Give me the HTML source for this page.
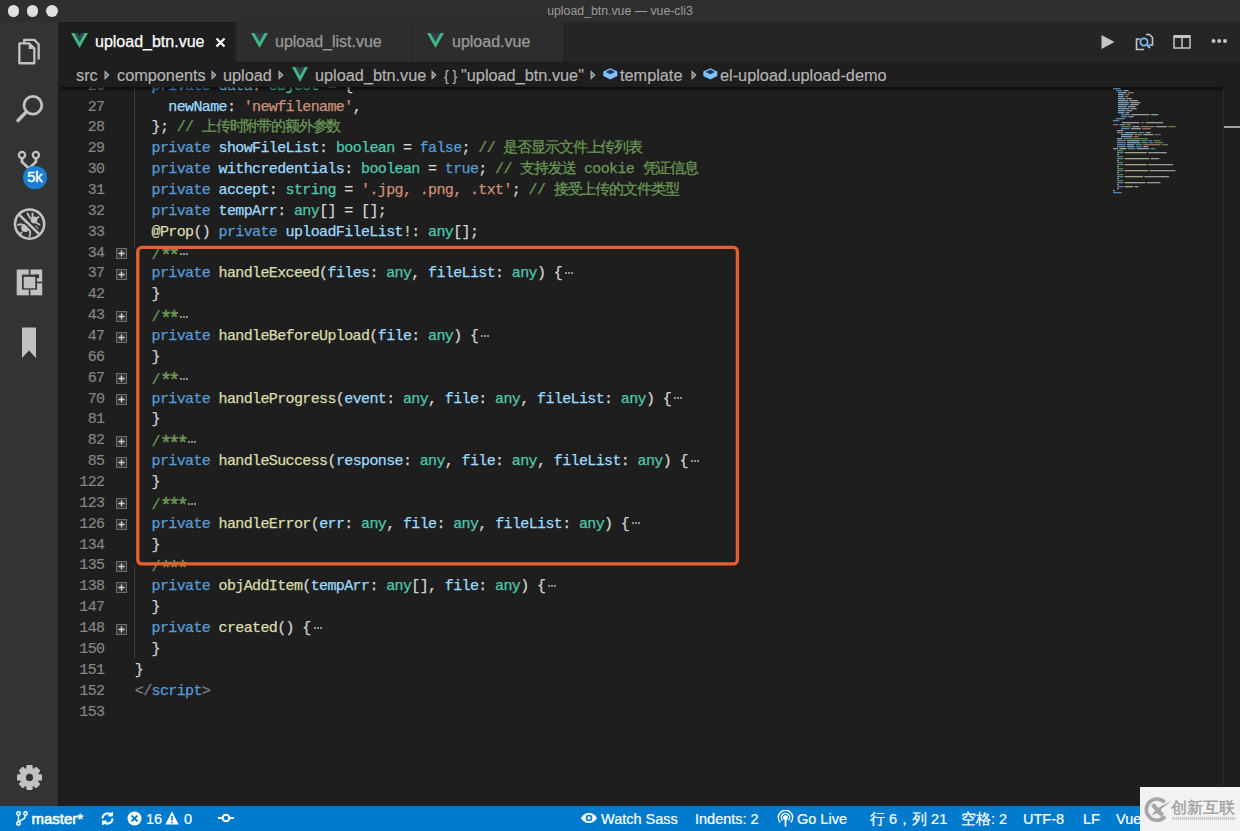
<!DOCTYPE html>
<html><head><meta charset="utf-8"><title>upload_btn.vue — vue-cli3</title>
<style>
*{margin:0;padding:0;box-sizing:border-box}
html,body{width:1240px;height:831px;overflow:hidden;background:#1e1e1e;font-family:"Liberation Sans",sans-serif}
.abs{position:absolute}
#title{position:absolute;left:0;top:0;width:1240px;height:22px;background:#2f2f2f}
#title .dot{position:absolute;top:4.8px;width:11.8px;height:11.8px;border-radius:50%;background:#e0e0e0}
#title .tt{position:absolute;left:0;width:1240px;top:3.7px;text-align:center;color:#9b9b9b;font-size:12.3px;line-height:14px;white-space:pre}
#act{position:absolute;left:0;top:22px;width:58px;height:784px;background:#333333}
#act svg{position:absolute}
#tabs{position:absolute;left:58px;top:22px;width:1182px;height:40px;background:#252526}
.tab{position:absolute;top:0;height:40px;background:#2d2d2d}
.tab .lbl{-webkit-text-stroke:0.25px currentColor;position:absolute;top:11px;font-size:16px;line-height:18px;color:#9a9a9a;white-space:pre}
.tab svg{position:absolute;top:11px}
#bc{-webkit-text-stroke:0.15px currentColor;position:absolute;left:58px;top:62px;width:1182px;height:25px;background:#1e1e1e;color:#b4b4b4;font-size:16.3px;line-height:18px;white-space:pre}
#bc span{position:absolute;top:3.6px}
#bc svg{position:absolute}
#bcsh{position:absolute;left:58px;top:87px;width:1166px;height:5px;background:linear-gradient(#000000a0,#00000000)}
#editor{position:absolute;left:58px;top:87px;width:1182px;height:719px;overflow:hidden}
#code{position:absolute;left:-58px;top:-87px;width:1240px;height:831px}
.ln{-webkit-text-stroke:0.25px currentColor;position:absolute;left:134.8px;height:20.86px;line-height:20.86px;font-family:"Liberation Mono",monospace;font-size:15px;letter-spacing:-0.625px;color:#d4d4d4;white-space:pre}
.nm{-webkit-text-stroke:0.2px currentColor;position:absolute;left:60px;width:44.5px;text-align:right;height:20.86px;line-height:20.86px;font-family:"Liberation Mono",monospace;font-size:15px;letter-spacing:-0.625px;color:#858585;white-space:pre}
.k{color:#569cd6}.f{color:#dcdcaa}.v{color:#9cdcfe}.t{color:#4ec9b0}.s{color:#ce9178}.c{color:#6a9955}.p{color:#d4d4d4}.g{color:#808080}
.el{display:inline-block;width:12px;height:10px;position:relative;vertical-align:middle}
.el:before{content:"";position:absolute;left:3px;top:3.5px;width:2px;height:2px;background:#8f8f8f;box-shadow:3px 0 #8f8f8f,6px 0 #8f8f8f}
#status{-webkit-text-stroke:0.2px #fff;position:absolute;left:0;top:806px;width:1240px;height:25px;background:#007acc;color:#ffffff;font-size:14.5px;line-height:16px;white-space:pre}
#status span{position:absolute;top:4.7px}
#status svg{position:absolute}
#wm{position:absolute;left:1140px;top:787px;width:100px;height:44px;background:#f2f2f2}
.ast{font-weight:normal;position:relative;top:3.5px;font-size:20px;letter-spacing:-3.625px;-webkit-text-stroke:0.5px currentColor}
.cj{font-size:15px;letter-spacing:-1.15px}
.fb{position:absolute;left:116px;width:11px;height:11px}

</style></head><body>
<div id="title">
  <div class="dot" style="left:7.5px"></div>
  <div class="dot" style="left:26.5px"></div>
  <div class="dot" style="left:46px"></div>
  <div class="tt">upload_btn.vue — vue-cli3</div>
</div>

<div id="act">
  <!-- explorer -->
  <svg style="left:16px;top:15px" width="26" height="28" viewBox="0 0 26 28" fill="none" stroke="#c2c2c2" stroke-width="2.3" stroke-linejoin="round">
    <path d="M3.35 6.45H13.3L18.35 11.5V26.25H3.35z"/>
    <path d="M13.3 6.45V11.5H18.35z" fill="#c2c2c2" stroke-width="1.2"/>
    <path d="M8.15 5.8V2.85H18.3L22.65 7.2V22.4"/>
  </svg>
  <!-- search -->
  <svg style="left:15px;top:73px" width="30" height="30" viewBox="0 0 30 30" fill="none" stroke="#c2c2c2" stroke-linecap="round">
    <circle cx="17.9" cy="10.3" r="8.9" stroke-width="2.8"/>
    <path d="M10.8 17.6L3 25.5" stroke-width="3.5"/>
  </svg>
  <!-- scm -->
  <svg style="left:14px;top:126px" width="30" height="26" viewBox="0 0 30 26" fill="none" stroke="#c2c2c2" stroke-width="2.3">
    <circle cx="8" cy="7" r="3.1"/>
    <circle cx="21.9" cy="7" r="3.1"/>
    <path d="M8 10.2v3.8l7 6.5M21.9 10.2v3.8l-7 6.5" stroke-width="2.8"/>
  </svg>
  <div style="position:absolute;left:22.6px;top:143.8px;width:24.7px;height:23px;border-radius:12px;background:#1a7fd4;color:#fff;font-size:14.5px;line-height:23px;text-align:center;-webkit-text-stroke:0.4px #fff">5k</div>
  <!-- debug -->
  <svg style="left:13px;top:183px" width="36" height="36" viewBox="0 0 36 36" fill="none" stroke="#c2c2c2" stroke-linecap="round">
    <circle cx="12.2" cy="23" r="4" fill="#c2c2c2" stroke="none"/>
    <path d="M5 19.8c2.5-1 4.5-.5 6 1M16 24.5c1.5 1.5 1.5 4 .5 7M8.5 27.5c-1 1-1.5 2-1.5 3" stroke-width="1.8"/>
    <circle cx="21" cy="15" r="3.4" fill="#c2c2c2" stroke="none"/>
    <path d="M14.5 8.5l2.5 4.5M19.5 8.5v3.5M25.5 12l-2.5 2M26.5 19.5l-3-1.5M25 24.5l-2-3" stroke-width="1.8"/>
    <path d="M6.6 10.1L25.9 28.9" stroke="#333333" stroke-width="6"/>
    <path d="M6.6 10.1L25.9 28.9" stroke-width="2.6"/>
    <circle cx="16.6" cy="19.1" r="14.6" stroke-width="2.6"/>
  </svg>
  <!-- extensions -->
  <svg style="left:16px;top:247px" width="28" height="28" viewBox="0 0 28 28">
    <rect x="0.7" y="0.5" width="25.5" height="25.8" fill="#c2c2c2"/>
    <rect x="6" y="5.6" width="15" height="15" fill="#333333"/>
    <path d="M19 5.6h4v3.5h-2z" fill="#333333"/>
    <rect x="7.7" y="7.8" width="11.6" height="11.5" fill="#c2c2c2"/>
    <rect x="12.8" y="0" width="1.6" height="6" fill="#333333"/>
    <rect x="12.8" y="20.5" width="1.6" height="6" fill="#333333"/>
    <rect x="20.5" y="12.7" width="6" height="1.6" fill="#333333"/>
  </svg>
  <!-- bookmark -->
  <svg style="left:21px;top:304px" width="16" height="33" viewBox="0 0 16 33" fill="#c2c2c2">
    <path d="M1 1.5h14v30.5l-7-7.5-7 7.5z"/>
  </svg>
  <!-- gear -->
  <svg style="left:15px;top:741px" width="30" height="30" viewBox="0 0 30 30">
    <g fill="#c2c2c2">
      <circle cx="14.5" cy="14.4" r="9.6"/>
      <rect x="11.3" y="1.9" width="6.4" height="25" rx="1.2"/>
      <rect x="11.3" y="1.9" width="6.4" height="25" rx="1.2" transform="rotate(45 14.5 14.4)"/>
      <rect x="11.3" y="1.9" width="6.4" height="25" rx="1.2" transform="rotate(90 14.5 14.4)"/>
      <rect x="11.3" y="1.9" width="6.4" height="25" rx="1.2" transform="rotate(135 14.5 14.4)"/>
    </g>
    <circle cx="14.5" cy="14.4" r="3.6" fill="#333333"/>
  </svg>
</div>

<div id="tabs">
  <div class="tab" style="left:0;width:176px;background:#1e1e1e">
    <svg style="left:13px" width="17" height="15" viewBox="0 0 261.76 226.69" preserveAspectRatio="none"><path d="M161.096.001l-30.225 52.351L100.647.001H-.005l130.877 226.688L261.749.001z" fill="#41b883"/><path d="M161.096.001l-30.225 52.351L100.647.001H52.346l78.526 136.01L209.398.001z" fill="#2f3d4c"/></svg>
    <div class="lbl" style="left:37px;color:#ffffff">upload_btn.vue</div>
    <svg style="left:157px;top:15px" width="11" height="11" viewBox="0 0 11 11"><path d="M1.5 1.5l8 8M9.5 1.5l-8 8" stroke="#ffffff" stroke-width="2.2"/></svg>
  </div>
  <div class="tab" style="left:179px;width:175px">
    <svg style="left:13.5px" width="17" height="15" viewBox="0 0 261.76 226.69" preserveAspectRatio="none"><path d="M161.096.001l-30.225 52.351L100.647.001H-.005l130.877 226.688L261.749.001z" fill="#41b883"/><path d="M161.096.001l-30.225 52.351L100.647.001H52.346l78.526 136.01L209.398.001z" fill="#2f3d4c"/></svg>
    <div class="lbl" style="left:38px">upload_list.vue</div>
  </div>
  <div class="tab" style="left:355px;width:150px">
    <svg style="left:13.5px" width="17" height="15" viewBox="0 0 261.76 226.69" preserveAspectRatio="none"><path d="M161.096.001l-30.225 52.351L100.647.001H-.005l130.877 226.688L261.749.001z" fill="#41b883"/><path d="M161.096.001l-30.225 52.351L100.647.001H52.346l78.526 136.01L209.398.001z" fill="#2f3d4c"/></svg>
    <div class="lbl" style="left:39px">upload.vue</div>
  </div>
  <!-- right actions -->
  <svg style="position:absolute;left:1042px;top:12px" width="16" height="16" viewBox="0 0 16 16"><path d="M1.5 1l13 7-13 7z" fill="#c5c5c5"/></svg>
  <svg style="position:absolute;left:1077px;top:11px" width="19" height="18" viewBox="0 0 19 18" fill="none" stroke="#c5c5c5" stroke-width="1.6">
    <path d="M5 6H1.5v10.5H9"/>
    <path d="M11 1.5h3.5l3 3V12H14"/>
    <circle cx="9" cy="9" r="3.6" stroke="#75beff" stroke-width="1.8"/>
    <path d="M11.5 11.5l3.5 3.5" stroke="#75beff" stroke-width="2"/>
  </svg>
  <svg style="position:absolute;left:1115px;top:12px" width="18" height="15" viewBox="0 0 18 15" fill="none" stroke="#c5c5c5">
    <rect x="1" y="2" width="16" height="12" stroke-width="1.5"/>
    <path d="M1 2.5h16" stroke-width="3"/>
    <path d="M9 2v12" stroke-width="1.5"/>
  </svg>
  <svg style="position:absolute;left:1153px;top:16px" width="16" height="6" viewBox="0 0 16 6" fill="#c5c5c5">
    <circle cx="2.5" cy="3" r="2"/><circle cx="8.2" cy="3" r="2"/><circle cx="14" cy="3" r="2"/>
  </svg>
</div>

<div id="bc">
  <span style="left:18px">src</span>
  <svg style="left:46px;top:8px" width="6" height="10" viewBox="0 0 6 10"><path d="M1.2 1.6L4.6 5L1.2 8.4Z" fill="#555" stroke="#b0b0b0" stroke-width="1.3"/></svg>
  <span style="left:59px">components</span>
  <svg style="left:153px;top:8px" width="6" height="10" viewBox="0 0 6 10"><path d="M1.2 1.6L4.6 5L1.2 8.4Z" fill="#555" stroke="#b0b0b0" stroke-width="1.3"/></svg>
  <span style="left:165px">upload</span>
  <svg style="left:220px;top:8px" width="6" height="10" viewBox="0 0 6 10"><path d="M1.2 1.6L4.6 5L1.2 8.4Z" fill="#555" stroke="#b0b0b0" stroke-width="1.3"/></svg>
  <svg style="left:234px;top:5px" width="16" height="15" viewBox="0 0 261.76 226.69" preserveAspectRatio="none"><path d="M161.096.001l-30.225 52.351L100.647.001H-.005l130.877 226.688L261.749.001z" fill="#41b883"/><path d="M161.096.001l-30.225 52.351L100.647.001H52.346l78.526 136.01L209.398.001z" fill="#2f3d4c"/></svg>
  <span style="left:257px">upload_btn.vue</span>
  <svg style="left:373px;top:8px" width="6" height="10" viewBox="0 0 6 10"><path d="M1.2 1.6L4.6 5L1.2 8.4Z" fill="#555" stroke="#b0b0b0" stroke-width="1.3"/></svg>
  <span style="left:386px;font-size:14px;top:4.5px">{ }</span>
  <span style="left:403px">"upload_btn.vue"</span>
  <svg style="left:532px;top:8px" width="6" height="10" viewBox="0 0 6 10"><path d="M1.2 1.6L4.6 5L1.2 8.4Z" fill="#555" stroke="#b0b0b0" stroke-width="1.3"/></svg>
  <svg style="left:545px;top:6px" width="15" height="12" viewBox="0 0 15 12"><path d="M7.3 0.2L14.3 3.6V8L7.3 11.6L0.3 8V3.6Z" fill="#80c2ff"/><path d="M7.3 1.6L12 3.9L7.3 6.3L2.6 3.9Z" fill="#1d3a5a"/></svg>
  <span style="left:562px">template</span>
  <svg style="left:633px;top:8px" width="6" height="10" viewBox="0 0 6 10"><path d="M1.2 1.6L4.6 5L1.2 8.4Z" fill="#555" stroke="#b0b0b0" stroke-width="1.3"/></svg>
  <svg style="left:644.5px;top:6px" width="15" height="12" viewBox="0 0 15 12"><path d="M7.3 0.2L14.3 3.6V8L7.3 11.6L0.3 8V3.6Z" fill="#80c2ff"/><path d="M7.3 1.6L12 3.9L7.3 6.3L2.6 3.9Z" fill="#1d3a5a"/></svg>
  <span style="left:662px">el-upload.upload-demo</span>
</div>

<div id="editor">
  <div id="code">
    <div style="position:absolute;left:134px;top:87px;width:1px;height:160px;background:#404040"></div>
    <div style="position:absolute;left:134px;top:565px;width:1px;height:93px;background:#404040"></div>
<div class="nm" style="top:76.71px">26</div>
<div class="nm" style="top:97.57px">27</div>
<div class="nm" style="top:118.43px">28</div>
<div class="nm" style="top:139.29px">29</div>
<div class="nm" style="top:160.15px">30</div>
<div class="nm" style="top:181.01px">31</div>
<div class="nm" style="top:201.87px">32</div>
<div class="nm" style="top:222.73px">33</div>
<div class="nm" style="top:243.59px">34</div>
<div class="nm" style="top:264.45px">37</div>
<div class="nm" style="top:285.31px">42</div>
<div class="nm" style="top:306.17px">43</div>
<div class="nm" style="top:327.03px">47</div>
<div class="nm" style="top:347.89px">66</div>
<div class="nm" style="top:368.75px">67</div>
<div class="nm" style="top:389.61px">70</div>
<div class="nm" style="top:410.47px">81</div>
<div class="nm" style="top:431.33px">82</div>
<div class="nm" style="top:452.19px">85</div>
<div class="nm" style="top:473.05px">122</div>
<div class="nm" style="top:493.91px">123</div>
<div class="nm" style="top:514.77px">126</div>
<div class="nm" style="top:535.63px">134</div>
<div class="nm" style="top:556.49px">135</div>
<div class="nm" style="top:577.35px">138</div>
<div class="nm" style="top:598.21px">147</div>
<div class="nm" style="top:619.07px">148</div>
<div class="nm" style="top:639.93px">150</div>
<div class="nm" style="top:660.79px">151</div>
<div class="nm" style="top:681.65px">152</div>
<div class="nm" style="top:702.51px">153</div>
<svg class="fb" style="top:248.0px" viewBox="0 0 11 11"><rect x=".5" y=".5" width="10" height="10" fill="#353535" stroke="#6e6e6e"/><path d="M2.5 5.5h6M5.5 2.5v6" stroke="#dcdcdc" stroke-width="1.3"/></svg>
<svg class="fb" style="top:268.9px" viewBox="0 0 11 11"><rect x=".5" y=".5" width="10" height="10" fill="#353535" stroke="#6e6e6e"/><path d="M2.5 5.5h6M5.5 2.5v6" stroke="#dcdcdc" stroke-width="1.3"/></svg>
<svg class="fb" style="top:310.6px" viewBox="0 0 11 11"><rect x=".5" y=".5" width="10" height="10" fill="#353535" stroke="#6e6e6e"/><path d="M2.5 5.5h6M5.5 2.5v6" stroke="#dcdcdc" stroke-width="1.3"/></svg>
<svg class="fb" style="top:331.5px" viewBox="0 0 11 11"><rect x=".5" y=".5" width="10" height="10" fill="#353535" stroke="#6e6e6e"/><path d="M2.5 5.5h6M5.5 2.5v6" stroke="#dcdcdc" stroke-width="1.3"/></svg>
<svg class="fb" style="top:373.2px" viewBox="0 0 11 11"><rect x=".5" y=".5" width="10" height="10" fill="#353535" stroke="#6e6e6e"/><path d="M2.5 5.5h6M5.5 2.5v6" stroke="#dcdcdc" stroke-width="1.3"/></svg>
<svg class="fb" style="top:394.0px" viewBox="0 0 11 11"><rect x=".5" y=".5" width="10" height="10" fill="#353535" stroke="#6e6e6e"/><path d="M2.5 5.5h6M5.5 2.5v6" stroke="#dcdcdc" stroke-width="1.3"/></svg>
<svg class="fb" style="top:435.8px" viewBox="0 0 11 11"><rect x=".5" y=".5" width="10" height="10" fill="#353535" stroke="#6e6e6e"/><path d="M2.5 5.5h6M5.5 2.5v6" stroke="#dcdcdc" stroke-width="1.3"/></svg>
<svg class="fb" style="top:456.6px" viewBox="0 0 11 11"><rect x=".5" y=".5" width="10" height="10" fill="#353535" stroke="#6e6e6e"/><path d="M2.5 5.5h6M5.5 2.5v6" stroke="#dcdcdc" stroke-width="1.3"/></svg>
<svg class="fb" style="top:498.3px" viewBox="0 0 11 11"><rect x=".5" y=".5" width="10" height="10" fill="#353535" stroke="#6e6e6e"/><path d="M2.5 5.5h6M5.5 2.5v6" stroke="#dcdcdc" stroke-width="1.3"/></svg>
<svg class="fb" style="top:519.2px" viewBox="0 0 11 11"><rect x=".5" y=".5" width="10" height="10" fill="#353535" stroke="#6e6e6e"/><path d="M2.5 5.5h6M5.5 2.5v6" stroke="#dcdcdc" stroke-width="1.3"/></svg>
<svg class="fb" style="top:560.9px" viewBox="0 0 11 11"><rect x=".5" y=".5" width="10" height="10" fill="#353535" stroke="#6e6e6e"/><path d="M2.5 5.5h6M5.5 2.5v6" stroke="#dcdcdc" stroke-width="1.3"/></svg>
<svg class="fb" style="top:581.8px" viewBox="0 0 11 11"><rect x=".5" y=".5" width="10" height="10" fill="#353535" stroke="#6e6e6e"/><path d="M2.5 5.5h6M5.5 2.5v6" stroke="#dcdcdc" stroke-width="1.3"/></svg>
<svg class="fb" style="top:623.5px" viewBox="0 0 11 11"><rect x=".5" y=".5" width="10" height="10" fill="#353535" stroke="#6e6e6e"/><path d="M2.5 5.5h6M5.5 2.5v6" stroke="#dcdcdc" stroke-width="1.3"/></svg>
<div class="ln" style="top:76.71px">  <span class="k">private </span><span class="v">data</span><span class="p">: </span><span class="t">object</span><span class="p"> = {</span></div>
<div class="ln" style="top:97.57px">    <span class="v">newName</span><span class="p">: </span><span class="s">'newfilename'</span><span class="p">,</span></div>
<div class="ln" style="top:118.43px">  <span class="p">}; </span><span class="c">// <span class="cj">上传时附带的额外参数</span></span></div>
<div class="ln" style="top:139.29px">  <span class="k">private </span><span class="v">showFileList</span><span class="p">: </span><span class="t">boolean</span><span class="p"> = </span><span class="k">false</span><span class="p">; </span><span class="c">// <span class="cj">是否显示文件上传列表</span></span></div>
<div class="ln" style="top:160.15px">  <span class="k">private </span><span class="v">withcredentials</span><span class="p">: </span><span class="t">boolean</span><span class="p"> = </span><span class="k">true</span><span class="p">; </span><span class="c">// <span class="cj">支持发送</span> cookie <span class="cj">凭证信息</span></span></div>
<div class="ln" style="top:181.01px">  <span class="k">private </span><span class="v">accept</span><span class="p">: </span><span class="t">string</span><span class="p"> = </span><span class="s">'.jpg, .png, .txt'</span><span class="p">; </span><span class="c">// <span class="cj">接受上传的文件类型</span></span></div>
<div class="ln" style="top:201.87px">  <span class="k">private </span><span class="v">tempArr</span><span class="p">: </span><span class="t">any</span><span class="p">[] = [];</span></div>
<div class="ln" style="top:222.73px">  <span class="f">@Prop</span><span class="p">() </span><span class="k">private </span><span class="v">uploadFileList</span><span class="p">!: </span><span class="t">any</span><span class="p">[];</span></div>
<div class="ln" style="top:243.59px">  <span class="c">/<b class="ast">*</b><b class="ast">*</b></span><i class="el"></i></div>
<div class="ln" style="top:264.45px">  <span class="k">private </span><span class="f">handleExceed</span><span class="p">(</span><span class="v">files</span><span class="p">: </span><span class="t">any</span><span class="p">, </span><span class="v">fileList</span><span class="p">: </span><span class="t">any</span><span class="p">) {</span><i class="el"></i></div>
<div class="ln" style="top:285.31px">  <span class="p">}</span></div>
<div class="ln" style="top:306.17px">  <span class="c">/<b class="ast">*</b><b class="ast">*</b></span><i class="el"></i></div>
<div class="ln" style="top:327.03px">  <span class="k">private </span><span class="f">handleBeforeUpload</span><span class="p">(</span><span class="v">file</span><span class="p">: </span><span class="t">any</span><span class="p">) {</span><i class="el"></i></div>
<div class="ln" style="top:347.89px">  <span class="p">}</span></div>
<div class="ln" style="top:368.75px">  <span class="c">/<b class="ast">*</b><b class="ast">*</b></span><i class="el"></i></div>
<div class="ln" style="top:389.61px">  <span class="k">private </span><span class="f">handleProgress</span><span class="p">(</span><span class="v">event</span><span class="p">: </span><span class="t">any</span><span class="p">, </span><span class="v">file</span><span class="p">: </span><span class="t">any</span><span class="p">, </span><span class="v">fileList</span><span class="p">: </span><span class="t">any</span><span class="p">) {</span><i class="el"></i></div>
<div class="ln" style="top:410.47px">  <span class="p">}</span></div>
<div class="ln" style="top:431.33px">  <span class="c">/<b class="ast">*</b><b class="ast">*</b><b class="ast">*</b></span><i class="el"></i></div>
<div class="ln" style="top:452.19px">  <span class="k">private </span><span class="f">handleSuccess</span><span class="p">(</span><span class="v">response</span><span class="p">: </span><span class="t">any</span><span class="p">, </span><span class="v">file</span><span class="p">: </span><span class="t">any</span><span class="p">, </span><span class="v">fileList</span><span class="p">: </span><span class="t">any</span><span class="p">) {</span><i class="el"></i></div>
<div class="ln" style="top:473.05px">  <span class="p">}</span></div>
<div class="ln" style="top:493.91px">  <span class="c">/<b class="ast">*</b><b class="ast">*</b><b class="ast">*</b></span><i class="el"></i></div>
<div class="ln" style="top:514.77px">  <span class="k">private </span><span class="f">handleError</span><span class="p">(</span><span class="v">err</span><span class="p">: </span><span class="t">any</span><span class="p">, </span><span class="v">file</span><span class="p">: </span><span class="t">any</span><span class="p">, </span><span class="v">fileList</span><span class="p">: </span><span class="t">any</span><span class="p">) {</span><i class="el"></i></div>
<div class="ln" style="top:535.63px">  <span class="p">}</span></div>
<div class="ln" style="top:556.49px">  <span class="c">/<b class="ast">*</b><b class="ast">*</b><b class="ast">*</b></span></div>
<div class="ln" style="top:577.35px">  <span class="k">private </span><span class="f">objAddItem</span><span class="p">(</span><span class="v">tempArr</span><span class="p">: </span><span class="t">any</span><span class="p">[], </span><span class="v">file</span><span class="p">: </span><span class="t">any</span><span class="p">) {</span><i class="el"></i></div>
<div class="ln" style="top:598.21px">  <span class="p">}</span></div>
<div class="ln" style="top:619.07px">  <span class="k">private </span><span class="f">created</span><span class="p">() {</span><i class="el"></i></div>
<div class="ln" style="top:639.93px">  <span class="p">}</span></div>
<div class="ln" style="top:660.79px"><span class="p">}</span></div>
<div class="ln" style="top:681.65px"><span class="g">&lt;/</span><span class="k">script</span><span class="g">&gt;</span></div>
<div class="ln" style="top:702.51px"></div>
    <svg style="position:absolute;left:0;top:0" width="1240" height="831"><rect x="137.8" y="247.4" width="599.6" height="316.5" rx="4" fill="none" stroke="#e8602f" stroke-width="3.3"/></svg>
  </div>
</div>
<div id="bcsh"></div>
<div style="position:absolute;left:58px;top:87px;width:3px;height:719px;background:#1b1b1b"></div>

<!-- minimap -->
<div id="mm" style="position:absolute;left:1112px;top:87px;width:112px;height:110px">
<svg width="112" height="112" viewBox="0 0 112 112" style="position:absolute;left:0;top:0;opacity:.8"><defs><filter id="mb" x="-5%" y="-5%" width="110%" height="110%"><feGaussianBlur stdDeviation="0.45"/></filter></defs><g filter="url(#mb)">
<rect x="1.0" y="1.0" width="7.4" height="1.3" fill="#6a9fcf"/>
<rect x="4.0" y="3.0" width="6.2" height="1.3" fill="#6a9fcf"/>
<rect x="11.5" y="3.0" width="5.0" height="1.3" fill="#8fc0dc"/>
<rect x="6.0" y="5.0" width="8.7" height="1.3" fill="#8fc0dc"/>
<rect x="16.0" y="5.0" width="5.6" height="1.3" fill="#b5846a"/>
<rect x="6.0" y="7.0" width="6.2" height="1.3" fill="#8fc0dc"/>
<rect x="13.5" y="7.0" width="3.7" height="1.3" fill="#b5846a"/>
<rect x="6.0" y="9.0" width="5.6" height="1.3" fill="#8fc0dc"/>
<rect x="12.9" y="9.0" width="3.1" height="1.3" fill="#b5846a"/>
<rect x="6.0" y="11.0" width="7.4" height="1.3" fill="#8fc0dc"/>
<rect x="14.7" y="11.0" width="5.0" height="1.3" fill="#b8b8b8"/>
<rect x="6.0" y="13.0" width="9.9" height="1.3" fill="#8fc0dc"/>
<rect x="17.2" y="13.0" width="8.7" height="1.3" fill="#b8b8b8"/>
<rect x="6.0" y="15.0" width="11.2" height="1.3" fill="#8fc0dc"/>
<rect x="18.5" y="15.0" width="9.9" height="1.3" fill="#b8b8b8"/>
<rect x="6.0" y="17.0" width="10.5" height="1.3" fill="#8fc0dc"/>
<rect x="17.8" y="17.0" width="8.7" height="1.3" fill="#b8b8b8"/>
<rect x="6.0" y="19.0" width="8.7" height="1.3" fill="#8fc0dc"/>
<rect x="16.0" y="19.0" width="7.4" height="1.3" fill="#b8b8b8"/>
<rect x="6.0" y="21.0" width="11.2" height="1.3" fill="#8fc0dc"/>
<rect x="18.5" y="21.0" width="6.2" height="1.3" fill="#b8b8b8"/>
<rect x="6.0" y="23.0" width="7.4" height="1.3" fill="#8fc0dc"/>
<rect x="14.7" y="23.0" width="5.6" height="1.3" fill="#b8b8b8"/>
<rect x="6.0" y="25.0" width="6.2" height="1.3" fill="#8fc0dc"/>
<rect x="13.5" y="25.0" width="3.7" height="1.3" fill="#b8b8b8"/>
<rect x="9.0" y="27.0" width="8.7" height="1.3" fill="#6a9fcf"/>
<rect x="19.0" y="27.0" width="18.6" height="1.3" fill="#b8b8b8"/>
<rect x="38.9" y="27.0" width="7.4" height="1.3" fill="#8fc0dc"/>
<rect x="9.0" y="29.0" width="6.2" height="1.3" fill="#6a9fcf"/>
<rect x="16.5" y="29.0" width="5.0" height="1.3" fill="#b8b8b8"/>
<rect x="4.0" y="31.0" width="8.7" height="1.3" fill="#6a9fcf"/>
<rect x="1.0" y="33.0" width="6.2" height="1.3" fill="#6a9fcf"/>
<rect x="10.0" y="35.0" width="17.4" height="1.3" fill="#b8b8b8"/>
<rect x="28.7" y="35.0" width="3.7" height="1.3" fill="#808080"/>
<rect x="33.7" y="35.0" width="17.4" height="1.3" fill="#b8b8b8"/>
<rect x="1.0" y="37.0" width="5.0" height="1.3" fill="#b07ab0"/>
<rect x="7.3" y="37.0" width="6.2" height="1.3" fill="#6a9fcf"/>
<rect x="14.8" y="37.0" width="3.7" height="1.3" fill="#b5846a"/>
<rect x="9.0" y="39.0" width="9.9" height="1.3" fill="#6a9955"/>
<rect x="20.2" y="39.0" width="7.4" height="1.3" fill="#b8b8b8"/>
<rect x="29.0" y="39.0" width="13.6" height="1.3" fill="#b5846a"/>
<rect x="43.9" y="39.0" width="11.2" height="1.3" fill="#b8b8b8"/>
<rect x="56.4" y="39.0" width="7.4" height="1.3" fill="#6a9955"/>
<rect x="9.0" y="41.0" width="8.7" height="1.3" fill="#6a9fcf"/>
<rect x="19.0" y="41.0" width="9.9" height="1.3" fill="#b8b8b8"/>
<rect x="30.2" y="41.0" width="8.7" height="1.3" fill="#b5846a"/>
<rect x="5.0" y="43.0" width="6.2" height="1.3" fill="#b8b8b8"/>
<rect x="5.0" y="45.0" width="6.2" height="1.3" fill="#6a9fcf"/>
<rect x="12.5" y="45.0" width="12.4" height="1.3" fill="#8fc0dc"/>
<rect x="26.2" y="45.0" width="6.2" height="1.3" fill="#4ea996"/>
<rect x="33.7" y="45.0" width="5.0" height="1.3" fill="#b8b8b8"/>
<rect x="9.0" y="47.0" width="12.4" height="1.3" fill="#8fc0dc"/>
<rect x="22.7" y="47.0" width="7.4" height="1.3" fill="#b5846a"/>
<rect x="31.4" y="47.0" width="9.9" height="1.3" fill="#b8b8b8"/>
<rect x="42.7" y="47.0" width="6.2" height="1.3" fill="#6a9955"/>
<rect x="9.0" y="49.0" width="11.2" height="1.3" fill="#8fc0dc"/>
<rect x="21.5" y="49.0" width="5.0" height="1.3" fill="#b5846a"/>
<rect x="5.0" y="51.0" width="5.0" height="1.3" fill="#b8b8b8"/>
<rect x="11.3" y="51.0" width="24.8" height="1.3" fill="#6a9955"/>
<rect x="5.0" y="53.0" width="8.7" height="1.3" fill="#6a9fcf"/>
<rect x="15.0" y="53.0" width="12.4" height="1.3" fill="#8fc0dc"/>
<rect x="28.7" y="53.0" width="6.2" height="1.3" fill="#4ea996"/>
<rect x="36.2" y="53.0" width="3.7" height="1.3" fill="#6a9fcf"/>
<rect x="41.2" y="53.0" width="7.4" height="1.3" fill="#6a9955"/>
<rect x="5.0" y="55.0" width="8.7" height="1.3" fill="#6a9fcf"/>
<rect x="15.0" y="55.0" width="13.6" height="1.3" fill="#8fc0dc"/>
<rect x="29.9" y="55.0" width="6.2" height="1.3" fill="#4ea996"/>
<rect x="37.4" y="55.0" width="3.7" height="1.3" fill="#6a9fcf"/>
<rect x="42.4" y="55.0" width="8.7" height="1.3" fill="#6a9955"/>
<rect x="5.0" y="57.0" width="8.7" height="1.3" fill="#6a9fcf"/>
<rect x="15.0" y="57.0" width="7.4" height="1.3" fill="#8fc0dc"/>
<rect x="23.7" y="57.0" width="6.2" height="1.3" fill="#4ea996"/>
<rect x="31.2" y="57.0" width="17.4" height="1.3" fill="#b5846a"/>
<rect x="49.9" y="57.0" width="6.2" height="1.3" fill="#6a9955"/>
<rect x="5.0" y="59.0" width="8.7" height="1.3" fill="#6a9fcf"/>
<rect x="15.0" y="59.0" width="7.4" height="1.3" fill="#8fc0dc"/>
<rect x="23.7" y="59.0" width="6.2" height="1.3" fill="#4ea996"/>
<rect x="31.2" y="59.0" width="5.0" height="1.3" fill="#b8b8b8"/>
<rect x="1.0" y="61.0" width="5.0" height="1.3" fill="#b8b8b8"/>
<rect x="7.3" y="61.0" width="7.4" height="1.3" fill="#c8c89a"/>
<rect x="16.0" y="61.0" width="7.4" height="1.3" fill="#6a9fcf"/>
<rect x="24.7" y="61.0" width="12.4" height="1.3" fill="#8fc0dc"/>
<rect x="38.4" y="61.0" width="5.0" height="1.3" fill="#4ea996"/>
<rect x="5.0" y="63.0" width="6.2" height="1.3" fill="#6a9955"/>
<rect x="5.0" y="65.0" width="6.2" height="1.3" fill="#6a9fcf"/>
<rect x="12.5" y="65.0" width="22.3" height="1.3" fill="#c8c89a"/>
<rect x="36.1" y="65.0" width="18.6" height="1.3" fill="#b8b8b8"/>
<rect x="5.0" y="67.0" width="1.9" height="1.3" fill="#b8b8b8"/>
<rect x="5.0" y="69.0" width="6.2" height="1.3" fill="#6a9955"/>
<rect x="5.0" y="71.0" width="6.2" height="1.3" fill="#6a9fcf"/>
<rect x="12.5" y="71.0" width="24.8" height="1.3" fill="#c8c89a"/>
<rect x="38.6" y="71.0" width="8.7" height="1.3" fill="#b8b8b8"/>
<rect x="5.0" y="73.0" width="1.9" height="1.3" fill="#b8b8b8"/>
<rect x="5.0" y="75.0" width="6.2" height="1.3" fill="#6a9955"/>
<rect x="5.0" y="77.0" width="6.2" height="1.3" fill="#6a9fcf"/>
<rect x="12.5" y="77.0" width="22.3" height="1.3" fill="#c8c89a"/>
<rect x="36.1" y="77.0" width="24.8" height="1.3" fill="#b8b8b8"/>
<rect x="5.0" y="79.0" width="1.9" height="1.3" fill="#b8b8b8"/>
<rect x="5.0" y="81.0" width="6.2" height="1.3" fill="#6a9955"/>
<rect x="5.0" y="83.0" width="6.2" height="1.3" fill="#6a9fcf"/>
<rect x="12.5" y="83.0" width="23.6" height="1.3" fill="#c8c89a"/>
<rect x="37.4" y="83.0" width="26.0" height="1.3" fill="#b8b8b8"/>
<rect x="5.0" y="85.0" width="1.9" height="1.3" fill="#b8b8b8"/>
<rect x="5.0" y="87.0" width="6.2" height="1.3" fill="#6a9955"/>
<rect x="5.0" y="89.0" width="6.2" height="1.3" fill="#6a9fcf"/>
<rect x="12.5" y="89.0" width="18.6" height="1.3" fill="#c8c89a"/>
<rect x="32.4" y="89.0" width="24.8" height="1.3" fill="#b8b8b8"/>
<rect x="5.0" y="91.0" width="1.9" height="1.3" fill="#b8b8b8"/>
<rect x="5.0" y="93.0" width="6.2" height="1.3" fill="#6a9955"/>
<rect x="5.0" y="95.0" width="6.2" height="1.3" fill="#6a9fcf"/>
<rect x="12.5" y="95.0" width="21.1" height="1.3" fill="#c8c89a"/>
<rect x="34.9" y="95.0" width="13.6" height="1.3" fill="#b8b8b8"/>
<rect x="5.0" y="97.0" width="1.9" height="1.3" fill="#b8b8b8"/>
<rect x="5.0" y="99.0" width="6.2" height="1.3" fill="#6a9fcf"/>
<rect x="12.5" y="99.0" width="8.7" height="1.3" fill="#c8c89a"/>
<rect x="22.5" y="99.0" width="3.7" height="1.3" fill="#b8b8b8"/>
<rect x="5.0" y="101.0" width="1.9" height="1.3" fill="#b8b8b8"/>
<rect x="1.0" y="103.0" width="1.9" height="1.3" fill="#b8b8b8"/>
<rect x="1.0" y="105.0" width="8.7" height="1.3" fill="#6a9fcf"/>
</g></svg>
</div>
<div style="position:absolute;left:1223px;top:87px;width:1px;height:719px;background:#2b2b2b"></div>
<div style="position:absolute;left:1224px;top:126px;width:16px;height:2px;background:#a0a0a0"></div>

<div id="status">
  <svg style="left:16px;top:5px" width="12" height="15" viewBox="0 0 12 15" fill="none" stroke="#fff" stroke-width="1.5">
    <circle cx="2.5" cy="2.5" r="1.7"/><circle cx="2.5" cy="12.5" r="1.7"/><circle cx="9.5" cy="2.5" r="1.7"/>
    <path d="M2.5 4.2v6.6M9.5 4.2c0 3-2 4-7 6.6"/>
  </svg>
  <span style="left:31.5px;font-size:15px;-webkit-text-stroke:0.55px #fff">master*</span>
  <svg style="left:100px;top:5px" width="15" height="15" viewBox="0 0 15 15" fill="none" stroke="#fff" stroke-width="2">
    <path d="M2.5 7.5a5 5 0 0 1 8.8-3.3M12.5 7.5a5 5 0 0 1-8.8 3.3"/>
    <path d="M12.5 1v4h-4z" fill="#fff" stroke-width="1"/><path d="M2.5 14v-4h4z" fill="#fff" stroke-width="1"/>
  </svg>
  <svg style="left:127px;top:5px" width="15" height="15" viewBox="0 0 15 15"><circle cx="7.5" cy="7.5" r="7" fill="#fff"/><path d="M4.6 4.6l5.8 5.8M10.4 4.6l-5.8 5.8" stroke="#007acc" stroke-width="2"/></svg>
  <span style="left:146px">16</span>
  <svg style="left:165px;top:5px" width="14" height="14" viewBox="0 0 14 14"><path d="M7 .5l6.7 13H.3z" fill="#fff"/><path d="M7 5v4.5M7 10.8v1.5" stroke="#007acc" stroke-width="1.6"/></svg>
  <span style="left:184px">0</span>
  <svg style="left:218px;top:7px" width="16" height="10" viewBox="0 0 16 10" fill="none" stroke="#fff" stroke-width="2"><circle cx="8" cy="5" r="3.3"/><path d="M0 5h4.5M11.5 5H16"/></svg>

  <svg style="left:580px;top:6px" width="18" height="12" viewBox="0 0 18 12"><path d="M1 6c2-3.5 4.5-5 8-5s6 1.5 8 5c-2 3.5-4.5 5-8 5S3 9.5 1 6z" fill="#fff"/><circle cx="9" cy="6" r="3.3" fill="#007acc"/><circle cx="9" cy="6" r="1.7" fill="#fff"/></svg>
  <span style="left:601px">Watch Sass</span>
  <span style="left:695px">Indents: 2</span>
  <svg style="left:777px;top:4px" width="17" height="17" viewBox="0 0 17 17" fill="none" stroke="#fff" stroke-width="1.4">
    <circle cx="8.5" cy="7.5" r="1.8" fill="#fff"/>
    <path d="M5.5 10.5a4.2 4.2 0 1 1 6 0M3.3 12.5a7.2 7.2 0 1 1 10.4 0"/>
    <path d="M8.5 9.5v7" stroke-width="1.8"/>
  </svg>
  <span style="left:797px">Go Live</span>
  <span style="left:870px">行 6，列 21</span>
  <span style="left:961px">空格: 2</span>
  <span style="left:1023px">UTF-8</span>
  <span style="left:1083px">LF</span>
  <span style="left:1116px">Vue</span>
</div>

<div id="wm">
  <svg style="position:absolute;left:2px;top:9px" width="32" height="27" viewBox="0 0 32 27">
    <path d="M22.5 6.2A10.6 10.6 0 1 0 23 20.5" fill="none" stroke="#a6a6a6" stroke-width="3.6"/>
    <path d="M10.5 8.5l10 11" stroke="#a6a6a6" stroke-width="4.2"/>
    <path d="M9.5 19.5C13 14 19 9 29 5.5C23 9.5 19 13 16 17z" fill="#a6a6a6"/>
  </svg>
  <div style="position:absolute;left:31px;top:12px;font-size:16px;line-height:18px;color:#9c9c9c;white-space:pre;-webkit-text-stroke:0.3px #9c9c9c">创新互联</div>
  <div style="position:absolute;left:32px;top:30px;width:64px;height:3px;background:repeating-linear-gradient(90deg,#c4c4c4 0 1px,#e6e6e6 1px 2px);height:2.5px"></div>
</div>

</body></html>
